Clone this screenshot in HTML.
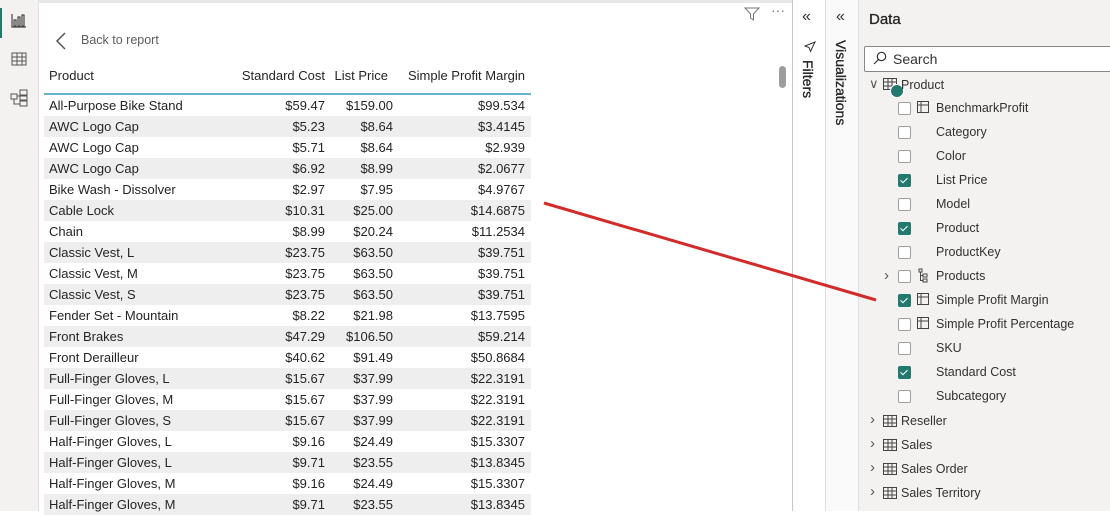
<!DOCTYPE html><html><head><style>
body{margin:0;width:1110px;height:511px;overflow:hidden;font-family:"Liberation Sans",sans-serif;background:#fff;position:relative}
.a{position:absolute}
.nav{left:0;top:0;width:38px;height:511px;background:#f3f2f1;border-right:1px solid #e1dfdd}
.row{position:absolute;left:44px;width:487px;height:21px;font-size:13px;color:#252423;line-height:21px}
.row.z{background:#eeeeee}
.row span{position:absolute}
.c1{left:5px}.c2{right:206px}.c3{right:138px}.c4{right:6px}
.pane{background:#f3f2f1}
.it{position:absolute;font-size:12.5px;color:#323130;line-height:16px}
.cb{position:absolute;width:11px;height:11px;border:1px solid #a19f9d;border-radius:2px;background:#fff}
.cb.on{background:#217a6b;border-color:#217a6b}
.cb.on:after{content:"";position:absolute;left:3px;top:1px;width:3px;height:6px;border:solid #fff;border-width:0 1.5px 1.5px 0;transform:rotate(45deg)}
.chev{position:absolute;font-size:15px;color:#555;line-height:16px}
</style></head><body>
<div class="a nav"></div>
<div class="a" style="left:0;top:8px;width:2px;height:30px;background:#217a6b"></div>
<svg class="a" style="left:11px;top:12px" width="16" height="16" viewBox="0 0 16 16" fill="none" stroke="#444" stroke-width="1.2"><path d="M1 2v13h14"/><rect x="3" y="8" width="2" height="6"/><rect x="7" y="5" width="2" height="9"/><rect x="11" y="3" width="2" height="11"/></svg>
<svg class="a" style="left:11px;top:52px" width="16" height="14" viewBox="0 0 16 14" fill="none" stroke="#555" stroke-width="1"><rect x="1" y="1" width="14" height="12"/><path d="M1 5h14M1 9h14M6 1v12M11 1v12"/></svg>
<svg class="a" style="left:10px;top:89px" width="18" height="18" viewBox="0 0 18 18" fill="none" stroke="#555" stroke-width="1"><rect x="1" y="5" width="6" height="5"/><rect x="10" y="1" width="7" height="5"/><rect x="10" y="7" width="7" height="4"/><rect x="10" y="12" width="7" height="5"/><path d="M7 7h3M4 10v5h6"/></svg>
<div class="a" style="left:38px;top:0;width:755px;height:3px;background:#e8e8e8"></div>
<svg class="a" style="left:55px;top:32px" width="12" height="18" viewBox="0 0 12 18" fill="none" stroke="#555" stroke-width="1.5"><path d="M10 1L2 9l8 8"/></svg>
<div class="a" style="left:81px;top:33px;font-size:12.5px;color:#605e5c">Back to report</div>
<svg class="a" style="left:744px;top:6px" width="16" height="16" viewBox="0 0 16 16" fill="none" stroke="#777" stroke-width="1"><path d="M1 2h14l-5.5 6v6l-3-2V8z"/></svg>
<div class="a" style="left:771px;top:2px;font-size:14px;color:#777">···</div>
<div class="a" style="left:779px;top:66px;width:7px;height:22px;border-radius:4px;background:#9e9e9e"></div>
<div class="a" style="left:44px;top:68px;width:487px;height:20px;font-size:13px;color:#252423">
<span class="a" style="left:5px">Product</span><span class="a" style="right:206px">Standard Cost</span><span class="a" style="right:143px">List Price</span><span class="a" style="right:6px">Simple Profit Margin</span></div>
<div class="a" style="left:44px;top:93px;width:487px;height:2px;background:#6ab3c9"></div>
<div class="row" style="top:95px"><span class="c1">All-Purpose Bike Stand</span><span class="c2">$59.47</span><span class="c3">$159.00</span><span class="c4">$99.534</span></div>
<div class="row z" style="top:116px"><span class="c1">AWC Logo Cap</span><span class="c2">$5.23</span><span class="c3">$8.64</span><span class="c4">$3.4145</span></div>
<div class="row" style="top:137px"><span class="c1">AWC Logo Cap</span><span class="c2">$5.71</span><span class="c3">$8.64</span><span class="c4">$2.939</span></div>
<div class="row z" style="top:158px"><span class="c1">AWC Logo Cap</span><span class="c2">$6.92</span><span class="c3">$8.99</span><span class="c4">$2.0677</span></div>
<div class="row" style="top:179px"><span class="c1">Bike Wash - Dissolver</span><span class="c2">$2.97</span><span class="c3">$7.95</span><span class="c4">$4.9767</span></div>
<div class="row z" style="top:200px"><span class="c1">Cable Lock</span><span class="c2">$10.31</span><span class="c3">$25.00</span><span class="c4">$14.6875</span></div>
<div class="row" style="top:221px"><span class="c1">Chain</span><span class="c2">$8.99</span><span class="c3">$20.24</span><span class="c4">$11.2534</span></div>
<div class="row z" style="top:242px"><span class="c1">Classic Vest, L</span><span class="c2">$23.75</span><span class="c3">$63.50</span><span class="c4">$39.751</span></div>
<div class="row" style="top:263px"><span class="c1">Classic Vest, M</span><span class="c2">$23.75</span><span class="c3">$63.50</span><span class="c4">$39.751</span></div>
<div class="row z" style="top:284px"><span class="c1">Classic Vest, S</span><span class="c2">$23.75</span><span class="c3">$63.50</span><span class="c4">$39.751</span></div>
<div class="row" style="top:305px"><span class="c1">Fender Set - Mountain</span><span class="c2">$8.22</span><span class="c3">$21.98</span><span class="c4">$13.7595</span></div>
<div class="row z" style="top:326px"><span class="c1">Front Brakes</span><span class="c2">$47.29</span><span class="c3">$106.50</span><span class="c4">$59.214</span></div>
<div class="row" style="top:347px"><span class="c1">Front Derailleur</span><span class="c2">$40.62</span><span class="c3">$91.49</span><span class="c4">$50.8684</span></div>
<div class="row z" style="top:368px"><span class="c1">Full-Finger Gloves, L</span><span class="c2">$15.67</span><span class="c3">$37.99</span><span class="c4">$22.3191</span></div>
<div class="row" style="top:389px"><span class="c1">Full-Finger Gloves, M</span><span class="c2">$15.67</span><span class="c3">$37.99</span><span class="c4">$22.3191</span></div>
<div class="row z" style="top:410px"><span class="c1">Full-Finger Gloves, S</span><span class="c2">$15.67</span><span class="c3">$37.99</span><span class="c4">$22.3191</span></div>
<div class="row" style="top:431px"><span class="c1">Half-Finger Gloves, L</span><span class="c2">$9.16</span><span class="c3">$24.49</span><span class="c4">$15.3307</span></div>
<div class="row z" style="top:452px"><span class="c1">Half-Finger Gloves, L</span><span class="c2">$9.71</span><span class="c3">$23.55</span><span class="c4">$13.8345</span></div>
<div class="row" style="top:473px"><span class="c1">Half-Finger Gloves, M</span><span class="c2">$9.16</span><span class="c3">$24.49</span><span class="c4">$15.3307</span></div>
<div class="row z" style="top:494px"><span class="c1">Half-Finger Gloves, M</span><span class="c2">$9.71</span><span class="c3">$23.55</span><span class="c4">$13.8345</span></div>
<div class="a" style="left:792px;top:0;width:1px;height:511px;background:#c8c6c4"></div>
<div class="a" style="left:793px;top:0;width:32px;height:511px;background:#fff"></div>
<div class="a" style="left:825px;top:0;width:1px;height:511px;background:#e1dfdd"></div>
<div class="a" style="left:826px;top:0;width:32px;height:511px;background:#fafafa"></div>
<div class="a" style="left:858px;top:0;width:1px;height:511px;background:#e1dfdd"></div>
<div class="a pane" style="left:859px;top:0;width:251px;height:511px"></div>
<div class="a" style="left:802px;top:8px;font-size:16px;color:#333">«</div>
<div class="a" style="left:836px;top:8px;font-size:16px;color:#333">«</div>
<svg class="a" style="left:804px;top:41px" width="12" height="12" viewBox="0 0 12 12" fill="none" stroke="#333" stroke-width="1"><path d="M11 1L1 5l4 1.5 1.5 4z"/></svg>
<div class="a" style="left:800px;top:60px;font-size:14px;color:#252423;writing-mode:vertical-rl;-webkit-text-stroke:0.3px #252423">Filters</div>
<div class="a" style="left:833px;top:40px;font-size:14px;color:#252423;writing-mode:vertical-rl;-webkit-text-stroke:0.3px #252423">Visualizations</div>
<div class="a" style="left:869px;top:11px;font-size:15px;color:#252423;-webkit-text-stroke:0.3px #252423">Data</div>
<div class="a" style="left:864px;top:46px;width:250px;height:24px;border:1px solid #8a8886;border-radius:2px;background:#fff"></div>
<svg class="a" style="left:873px;top:51px" width="14" height="14" viewBox="0 0 14 14" fill="none" stroke="#333" stroke-width="1.2"><circle cx="8.5" cy="5.5" r="4.2"/><path d="M5.5 8.5L1 13"/></svg>
<div class="a" style="left:893px;top:51px;font-size:14px;color:#333">Search</div>
<div class="a" style="left:869px;top:76px;font-size:13px;color:#555">∨</div>
<svg class="a" style="left:883px;top:78px" width="14" height="12" viewBox="0 0 14 12" fill="none" stroke="#444" stroke-width="1"><rect x="0.5" y="0.5" width="13" height="11"/><path d="M0.5 4h13M0.5 8h13M5 .5v11M9 .5v11"/></svg>
<div class="a" style="left:890px;top:84px;width:12px;height:12px;border-radius:50%;background:#217a6b;border:1px solid #fff"></div>
<div class="it" style="left:901px;top:77px">Product</div>
<div class="cb" style="left:898px;top:102px"></div><svg class="a" style="left:917px;top:101px" width="15" height="14" viewBox="0 0 15 14" fill="none" stroke="#444" stroke-width="1"><rect x=".5" y=".5" width="11" height="11"/><path d="M.5 4h11M4 .5v11"/></svg><div class="it" style="left:936px;top:100px">BenchmarkProfit</div>
<div class="cb" style="left:898px;top:126px"></div><div class="it" style="left:936px;top:124px">Category</div>
<div class="cb" style="left:898px;top:150px"></div><div class="it" style="left:936px;top:148px">Color</div>
<div class="cb on" style="left:898px;top:174px"></div><div class="it" style="left:936px;top:172px">List Price</div>
<div class="cb" style="left:898px;top:198px"></div><div class="it" style="left:936px;top:196px">Model</div>
<div class="cb on" style="left:898px;top:222px"></div><div class="it" style="left:936px;top:220px">Product</div>
<div class="cb" style="left:898px;top:246px"></div><div class="it" style="left:936px;top:244px">ProductKey</div>
<div class="chev" style="left:884px;top:268px">›</div>
<div class="cb" style="left:898px;top:270px"></div><svg class="a" style="left:918px;top:268px" width="10" height="15" viewBox="0 0 10 15" fill="none" stroke="#444" stroke-width="1"><rect x="1" y="1" width="3" height="3"/><rect x="5" y="6" width="4" height="3"/><rect x="5" y="11" width="4" height="3"/><path d="M2.5 4v8.5H5M2.5 7.5H5"/></svg><div class="it" style="left:936px;top:268px">Products</div>
<div class="cb on" style="left:898px;top:294px"></div><svg class="a" style="left:917px;top:293px" width="15" height="14" viewBox="0 0 15 14" fill="none" stroke="#444" stroke-width="1"><rect x=".5" y=".5" width="11" height="11"/><path d="M.5 4h11M4 .5v11"/></svg><div class="it" style="left:936px;top:292px">Simple Profit Margin</div>
<div class="cb" style="left:898px;top:318px"></div><svg class="a" style="left:917px;top:317px" width="15" height="14" viewBox="0 0 15 14" fill="none" stroke="#444" stroke-width="1"><rect x=".5" y=".5" width="11" height="11"/><path d="M.5 4h11M4 .5v11"/></svg><div class="it" style="left:936px;top:316px">Simple Profit Percentage</div>
<div class="cb" style="left:898px;top:342px"></div><div class="it" style="left:936px;top:340px">SKU</div>
<div class="cb on" style="left:898px;top:366px"></div><div class="it" style="left:936px;top:364px">Standard Cost</div>
<div class="cb" style="left:898px;top:390px"></div><div class="it" style="left:936px;top:388px">Subcategory</div>
<div class="chev" style="left:870px;top:412px">›</div>
<div class="chev" style="left:870px;top:436px">›</div>
<div class="chev" style="left:870px;top:460px">›</div>
<div class="chev" style="left:870px;top:484px">›</div>
<svg class="a" style="left:883px;top:415px" width="14" height="84" viewBox="0 0 14 84" fill="none" stroke="#444" stroke-width="1"><g id="t"><rect x="0.5" y="0.5" width="13" height="11"/><path d="M0.5 4h13M0.5 8h13M5 .5v11M9 .5v11"/></g><use href="#t" y="24"/><use href="#t" y="48"/><use href="#t" y="72"/></svg>
<div class="it" style="left:901px;top:413px">Reseller</div>
<div class="it" style="left:901px;top:437px">Sales</div>
<div class="it" style="left:901px;top:461px">Sales Order</div>
<div class="it" style="left:901px;top:485px">Sales Territory</div>
<svg class="a" style="left:0;top:0" width="1110" height="511"><path d="M544 203L876 300" stroke="#d42a2a" stroke-width="3"/></svg>
</body></html>
